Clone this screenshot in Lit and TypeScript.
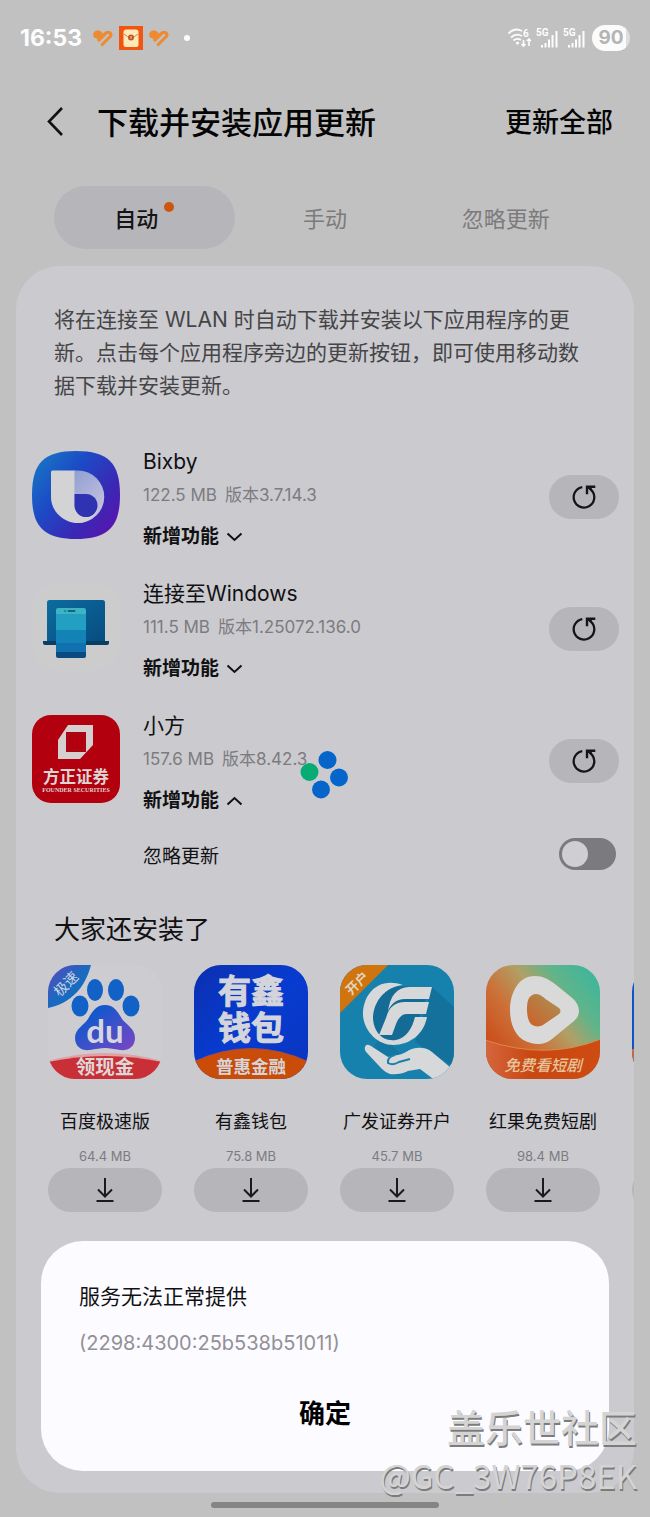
import { LitElement, html, css, svg, nothing } from "lit";
import { customElement, property, state } from "lit/decorators.js";

interface AppUpdate {
  id: string;
  name: string;
  size: string;
  version: string;
  expanded: boolean;
}

interface Suggestion {
  id: string;
  name: string;
  size: string;
}

const UPDATES: AppUpdate[] = [
  { id: "bixby", name: "Bixby", size: "122.5 MB", version: "版本3.7.14.3", expanded: false },
  { id: "windows", name: "连接至Windows", size: "111.5 MB", version: "版本1.25072.136.0", expanded: false },
  { id: "founder", name: "小方", size: "157.6 MB", version: "版本8.42.3", expanded: true },
];

const SUGGESTIONS: Suggestion[] = [
  { id: "baidu", name: "百度极速版", size: "64.4 MB" },
  { id: "wallet", name: "有鑫钱包", size: "75.8 MB" },
  { id: "guangfa", name: "广发证券开户", size: "45.7 MB" },
  { id: "hongguo", name: "红果免费短剧", size: "98.4 MB" },
  { id: "next", name: "", size: "" },
];

const ART: Record<string, unknown> = {
  bixby: svg`
    <defs>
      <linearGradient id="a" x1="0" y1="0.1" x2="1" y2="0.9">
        <stop offset="0" stop-color="#1679c4"/><stop offset="0.35" stop-color="#1c4bc6"/>
        <stop offset="0.7" stop-color="#3a28b4"/><stop offset="1" stop-color="#5d12ad"/>
      </linearGradient>
      <linearGradient id="b" x1="0" y1="0" x2="0.6" y2="1">
        <stop offset="0" stop-color="#8f9ed2"/><stop offset="1" stop-color="#c6c4de"/>
      </linearGradient>
    </defs>
    <path fill="url(#a)" d="M44 0C76 0 88 12 88 44S76 88 44 88 0 76 0 44 12 0 44 0Z"/>
    <path fill="url(#b)" d="M42 19.500H46A26 26 0 0 1 46 72H42Z"/>
    <path fill="#d3d3d6" d="M20.500 19.500H42.500V55C43 61 48 66 54 66C60 66 65 61 66 55C65 65 56 72 46 72C31 72 19 60 19 46V21Q19 19.500 20.500 19.500Z"/>
    <path fill="#2f32b1" d="M42.500 43H54A11.500 11.500 0 1 1 42.500 54.500Z"/>`,
  windows: svg`
    <defs>
      <linearGradient id="a" x1="0" y1="0" x2="1" y2="1">
        <stop offset="0" stop-color="#0b6d9f"/><stop offset="1" stop-color="#074b80"/>
      </linearGradient>
    </defs>
    <rect width="88" height="88" rx="26" fill="#cccccd"/>
    <rect x="15" y="17" width="58" height="43" rx="2.500" fill="url(#a)"/>
    <path fill="#073e61" d="M11 58H77V60Q77 62 75 62H13Q11 62 11 60Z"/>
    <rect x="24" y="25" width="30" height="50" rx="2" fill="#0a4a80"/>
    <path fill="#3fb3c6" d="M26 25H52Q54 25 54 27V31H24V27Q24 25 26 25Z"/>
    <path fill="#239fc2" d="M24 31H54V47H24Z"/>
    <path fill="#1383b7" d="M24 47H54V60H24Z"/>
    <path fill="#1071ae" d="M24 60H54V69H24Z"/>
    <circle cx="33" cy="28" r="0.800" fill="#0b4b68"/>
    <rect x="35.500" y="27.300" width="8" height="1.500" rx="0.700" fill="#0b4b68"/>`,
  founder: svg`
    <rect width="88" height="88" rx="19" fill="#b3000e"/>
    <path fill="#d5cfcf" d="M36 10H61V30L48 44H26V25Z"/>
    <path fill="#b3000e" d="M34 17H54V37H34Z"/>
    <path fill="none" stroke="#8f1a24" stroke-width="0.800" d="M36 19H52V35H36Z"/>
    <text class="art cn" x="44" y="68" font-size="16.500" text-anchor="middle" fill="#dcd6d6">方正证券</text>
    <text class="art serif" x="44" y="77" font-size="6" text-anchor="middle" fill="#dcd6d6">FOUNDER SECURITIES</text>`,
  baidu: svg`
    <defs>
      <clipPath id="c"><rect width="114" height="114" rx="27"/></clipPath>
      <linearGradient id="a" x1="0" y1="0" x2="1" y2="1">
        <stop offset="0.250" stop-color="#1557cb"/><stop offset="1" stop-color="#7c45c6"/>
      </linearGradient>
      <linearGradient id="b" x1="0" y1="0" x2="1" y2="1">
        <stop offset="0" stop-color="#6345be"/><stop offset="0.500" stop-color="#176bc0"/>
      </linearGradient>
    </defs>
    <g clip-path="url(#c)">
      <rect width="114" height="114" fill="#cdcdd1"/>
      <path fill="url(#b)" d="M0 0H43C37 23 23 38 0 43Z"/>
      <g fill="#1161c7">
        <ellipse cx="47" cy="25" rx="8" ry="11"/><ellipse cx="68" cy="25" rx="8" ry="11"/>
        <ellipse cx="32" cy="41" rx="8.500" ry="10.500"/><ellipse cx="83" cy="41" rx="8.500" ry="10.500"/>
      </g>
      <path fill="url(#a)" d="M57 40C66 40 70 47 74 54C79 60 87 64 87 73C87 82 80 86 72 85C66 84 62 83 57 83S48 84 42 85C34 86 27 82 27 73C27 64 36 60 40 54C44 47 48 40 57 40Z"/>
      <path fill="#e0a2a6" d="M0 96Q57 80 114 96V114H0Z"/>
      <path fill="#c92f37" d="M0 97Q57 85 114 97V114H0Z"/>
    </g>
    <text class="art round" x="57" y="78" font-size="33" text-anchor="middle" fill="#d6d6dc">du</text>
    <text class="art cn" x="57" y="109" font-size="19.500" text-anchor="middle" fill="#dcd8d8">领现金</text>
    <text class="art cnr" x="0" y="5" font-size="14" text-anchor="middle" fill="#cfd3e0" transform="translate(18 19) rotate(-45)">极速</text>`,
  wallet: svg`
    <defs>
      <clipPath id="c"><rect width="114" height="114" rx="27"/></clipPath>
      <linearGradient id="a" x1="0" y1="0" x2="1" y2="1">
        <stop offset="0" stop-color="#0b30b0"/><stop offset="0.500" stop-color="#073bd0"/><stop offset="1" stop-color="#0a35bd"/>
      </linearGradient>
    </defs>
    <g clip-path="url(#c)">
      <rect width="114" height="114" fill="url(#a)"/>
      <path fill="#c94c08" stroke="#a24a55" d="M-1 97Q57 70 115 97V116H-1Z"/>
    </g>
    <g class="art cn" text-anchor="middle" fill="#d4d5dc">
      <text x="57" y="38" font-size="33" stroke="#d4d5dc">有鑫</text>
      <text x="57" y="75" font-size="33" stroke="#d4d5dc">钱包</text>
      <text x="57" y="108" font-size="17.500">普惠金融</text>
    </g>`,
  guangfa: svg`
    <defs><clipPath id="c"><rect width="114" height="114" rx="27"/></clipPath></defs>
    <g clip-path="url(#c)">
      <rect width="114" height="114" fill="#1781ae"/>
      <path fill="#14719c" d="M92 22L114 42V102L75 77Z"/>
      <path fill="#126b95" d="M42 70L75 104L58 110L32 84Z" opacity="0.500"/>
      <path fill="#d0740d" d="M0 0H48L0 48Z"/>
      <path fill="#146c96" d="M62 21C44 22 32 36 33 54C34 66 42 76 53 77C70 77 78 64 80 50L90 24Z"/>
      <path fill="#d6d8da" d="M63 20C36 11 22 32 23 51C25 68 39 80 53 80C70 80 84 69 87 52H75C72 64 66 73 56 75C42 77 33 66 33 52C34 36 45 22 63 20Z"/>
      <path fill="#d6d8da" d="M92 22L89 34H65C56 34 51 39 48 46C50 31 57 22 69 22Z"/>
      <path fill="#d6d8da" d="M89 37L86 49H67C61 49 58 54 56 59L52 70H39L46 53C49 42 55 37 65 37Z"/>
      <path fill="#d6d8da" d="M25 82Q26 78 31 81L48 92C54 90 59 91 66 87Q74 82 82 83Q87 83 92 87L111 103L96 116L80 104L68 106Q60 110 50 109Q46 108 42 104L27 88Q24 85 25 82Z"/>
      <path fill="none" stroke="#1781ae" stroke-width="2" d="M55 90Q47 92 48 98Q53 101 59 97L70 94"/>
    </g>
    <text class="art cn" x="0" y="5" font-size="13" text-anchor="middle" fill="#e0d6c4" transform="translate(17 18) rotate(-45)">开户</text>`,
  hongguo: svg`
    <defs>
      <clipPath id="c"><rect width="114" height="114" rx="27"/></clipPath>
      <linearGradient id="a" x1="0" y1="0.700" x2="0.9" y2="0">
        <stop offset="0" stop-color="#cb4a18"/><stop offset="0.300" stop-color="#cc7038"/><stop offset="0.550" stop-color="#b0a065"/>
        <stop offset="0.750" stop-color="#60b48a"/><stop offset="1" stop-color="#3db69b"/>
      </linearGradient>
      <linearGradient id="b" x1="0" y1="0" x2="1" y2="0">
        <stop offset="0" stop-color="#d4663f"/><stop offset="0.400" stop-color="#c94710"/><stop offset="1" stop-color="#ce4b14"/>
      </linearGradient>
      <linearGradient id="d" x1="0" y1="1" x2="1" y2="0">
        <stop offset="0" stop-color="#cc6028"/><stop offset="1" stop-color="#a99458"/>
      </linearGradient>
    </defs>
    <g clip-path="url(#c)">
      <rect width="114" height="114" fill="url(#a)"/>
      <path fill="url(#b)" stroke="#d88a4a" d="M-1 75Q60 96 115 74V115H-1Z"/>
    </g>
    <path fill="#d9d9da" d="M49 11C57 11 62 14 69 19L85 32C95 40 95 50 88 56L66 74C60 79 53 80 45 78C30 75 24 60 24 45S31 11 49 11Z"/>
    <path fill="url(#d)" d="M50 29C54 29 57 32 61 35L73 43Q76 46 73 49L57 60C54 62 48 62 45 59C40 54 40 38 43 33Q46 29 50 29Z"/>
    <text class="art cnm slant" x="57" y="106" font-size="15.500" text-anchor="middle" fill="#e6c49c">免费看短剧</text>`,
  next: svg`
    <rect width="114" height="114" rx="27" fill="#0d54c4"/>
    <path fill="#d06a3a" d="M0 84H114V87A27 27 0 0 1 87 114H27A27 27 0 0 1 0 87Z"/>`,
};

@customElement("app-icon")
export class AppIcon extends LitElement {
  @property() name = "";

  static styles = css`
    :host { display: block; }
    svg { display: block; width: 100%; height: auto; overflow: visible; }
    .art { font-weight: 700; }
    .cn { font-family: "Noto Sans CJK SC", sans-serif; }
    .cnr { font-family: "Noto Sans CJK SC", sans-serif; font-weight: 400; }
    .cnm { font-family: "Noto Sans CJK SC", sans-serif; font-weight: 500; }
    .round { font-family: Lato, sans-serif; }
    .serif { font-family: "Liberation Serif", serif; }
    .slant { font-style: italic; }
  `;

  render() {
    const side = UPDATES.some((u) => u.id === this.name) ? 88 : 114;
    return html`<svg viewBox="0 0 ${side} ${side}" aria-hidden="true">${ART[this.name]}</svg>`;
  }
}

@customElement("status-bar")
export class StatusBar extends LitElement {
  static styles = css`
    :host {
      display: flex;
      align-items: center;
      height: 76px;
      padding: 0 20px;
      color: #fdfdfd;
      font: 700 23px/28px Inter, sans-serif;
    }
    svg { display: block; flex: none; }
    .notices { display: flex; align-items: center; gap: 6px; margin-left: 11px; }
    .dot { width: 6px; height: 6px; margin-left: 9px; border-radius: 50%; background: #fdfdfd; }
    .signals { display: flex; align-items: center; gap: 4px; margin-left: auto; }
    .battery {
      width: 38px;
      margin-left: 2px;
      border-radius: 13px;
      background: linear-gradient(90deg, #fbfbfb 90%, #dedede 90%);
      color: #b4b4b4;
      font-size: 19px;
      line-height: 26px;
      text-align: center;
    }
    .gen { font: 700 10px Roboto, sans-serif; }
  `;

  private heart() {
    return html`<svg width="20" height="17" viewBox="0 0 20 17" fill="none" stroke="#ee8a32" stroke-width="3.200" stroke-linecap="round" stroke-linejoin="round">
      <path d="M2.300 6.500Q0.800 3.500 3.500 2.200Q6 1.200 8 3.800L4.800 7.500L2.300 6Z" fill="#ee8a32" />
      <path d="M5.800 10L12.300 3.500Q13.500 2.200 15 2.300" />
      <path d="M9.300 14.500L17.200 6.500Q18.600 4.500 17 2.800" />
    </svg>`;
  }

  private cell() {
    return html`<svg width="23" height="22" viewBox="0 0 23 22" fill="#fdfdfd">
      <text class="gen" x="0" y="9">5G</text>
      <path d="M5 18h2v2.500h-2zM8.500 16h2v4.500h-2zM12 12.500h2v8h-2zM15.500 8h2v12.500h-2zM19.500 4h2v16.500h-2z"/>
    </svg>`;
  }

  render() {
    return html`
      <span>16:53</span>
      <span class="notices">
        ${this.heart()}
        <svg width="24" height="24" viewBox="0 0 24 24">
          <rect width="24" height="24" fill="#f0560f"/>
          <rect x="4.500" y="3.500" width="15" height="17.500" rx="2.500" fill="#fdeab8"/>
          <path d="M5 8Q12 15 19 8" fill="none" stroke="#c98a4a"/>
          <circle cx="12" cy="11.500" r="3" fill="#c2562b"/>
          <path d="M12 10v3" stroke="#f7c9a0"/>
        </svg>
        ${this.heart()}
        <span class="dot"></span>
      </span>
      <span class="signals">
        <svg width="24" height="22" viewBox="0 0 24 22" fill="none" stroke="#fdfdfd" stroke-width="1.800">
          <path d="M0.500 6.500Q7 0 14 4M3 10.500Q8 5.500 14 9M5.500 13.500Q9 10.500 13 13"/>
          <circle cx="9.500" cy="16" r="1.600" fill="#fdfdfd" stroke="none"/>
          <path stroke-width="1.600" d="M15.500 13V19M13.500 17L15.500 19L17.500 17M21 19V12M19 14L21 12L23 14"/>
          <text class="gen" x="15" y="9.500" fill="#fdfdfd" stroke="none">6</text>
        </svg>
        ${this.cell()} ${this.cell()}
        <span class="battery">90</span>
      </span>
    `;
  }
}

@customElement("app-root")
export class AppRoot extends LitElement {
  @state() private tab = 0;
  @state() private dialogOpen = true;
  @state() private updates = UPDATES;

  static styles = css`
    :host {
      display: flex;
      flex-direction: column;
      position: relative;
      box-sizing: border-box;
      min-height: 100vh;
      background: #c1c1c1;
      color: #111113;
      font-family: Inter, "Noto Sans CJK SC", sans-serif;
    }
    button {
      border: 0;
      padding: 0;
      background: none;
      color: inherit;
      font: inherit;
      cursor: pointer;
    }
    h1, h2, p { margin: 0; font-weight: 400; }
    svg { display: block; }

    .header { display: flex; align-items: center; height: 92px; padding: 0 37px 0 43px; }
    .back { width: 24px; margin-right: 30px; }
    .title { flex: 1; padding-top: 2px; font-size: 31px; line-height: 44px; font-weight: 500; color: #050505; }
    .update-all { padding-top: 2px; font-size: 27px; line-height: 40px; font-weight: 500; color: #050505; }

    .tabs { display: flex; margin: 18px 54px 17px; }
    .tab {
      display: flex;
      flex: 1;
      justify-content: center;
      gap: 6px;
      padding-top: 4px;
      border-radius: 32px;
      color: #7b7b7d;
      font-size: 22px;
      line-height: 59px;
    }
    .tab.active { background: #b6b5ba; color: #151518; font-weight: 500; }
    .badge {
      width: 10px;
      height: 10px;
      margin-top: 12px;
      border-radius: 50%;
      background: #cd560e;
    }

    .card {
      flex: 1;
      margin: 0 16px;
      border-radius: 44px;
      background: #cbcacf;
      overflow: hidden;
    }
    .intro { padding: 37px 38px 27px; color: #454547; font-size: 21px; line-height: 33px; }

    .row { display: flex; align-items: center; padding: 0 15px 0 16px; }
    .row app-icon { flex: none; width: 88px; margin-right: 23px; }
    .info { flex: 1; min-width: 0; padding-top: 17px; }
    .name { font-size: 21px; line-height: 32px; }
    .meta { display: flex; gap: 8px; color: #7c7c80; font-size: 17px; line-height: 35px; }
    .news {
      display: flex;
      align-items: center;
      gap: 7px;
      font-size: 19px;
      line-height: 48px;
      font-weight: 600;
    }
    .pill {
      display: flex;
      align-items: center;
      justify-content: center;
      height: 44px;
      border-radius: 22px;
      background: #b6b5ba;
    }
    .refresh { flex: none; width: 70px; margin-top: 4px; }

    .ignore {
      display: flex;
      align-items: center;
      justify-content: space-between;
      padding: 4px 18px 0 127px;
      font-size: 19px;
      line-height: 56px;
    }
    .switch {
      appearance: none;
      display: grid;
      align-items: center;
      width: 57px;
      height: 32px;
      margin: 0 0 6px;
      padding: 0 3px;
      border-radius: 16px;
      background: #7b7a7f;
    }
    .switch::before {
      content: "";
      width: 26px;
      height: 26px;
      border-radius: 50%;
      background: #cfced3;
    }
    .switch:checked::before { justify-self: end; }

    .heading { padding: 25px 38px 15px; font-size: 26px; line-height: 40px; }
    .carousel { display: flex; gap: 32px; padding-left: 32px; overflow: hidden; }
    .item { flex: none; width: 114px; }
    .item-name {
      display: flex;
      justify-content: center;
      height: 28px;
      margin-top: 29px;
      font-size: 18px;
      line-height: 28px;
      white-space: nowrap;
    }
    .item-size {
      height: 24px;
      margin-top: 8px;
      color: #7c7c80;
      font-size: 13px;
      line-height: 24px;
      text-align: center;
    }
    .item .pill { width: 100%; }

    .gesture { width: 35%; height: 6px; margin: 9px auto; border-radius: 3px; background: #858585; }

    .spinner { position: absolute; top: 750px; left: calc(50% - 25px); }

    .dialog {
      position: absolute;
      left: 41px;
      right: 41px;
      bottom: 46px;
      border-radius: 42px;
      background: #fcfbff;
    }
    .dialog-body { padding: 39px 38px 0; font-size: 21px; line-height: 34px; }
    .code { padding-top: 12px; color: #929196; font-size: 20px; }
    .confirm {
      display: block;
      width: 100%;
      padding: 34px 0 37px;
      color: #000;
      font-size: 26px;
      line-height: 40px;
      font-weight: 600;
    }

    .watermark {
      position: absolute;
      right: 13px;
      bottom: 18px;
      color: #d4d4d4;
      font-family: "Noto Sans CJK SC", sans-serif;
      text-align: right;
      text-shadow: 1px 2px 0 #7c7c7c;
      pointer-events: none;
    }
    .community { padding-bottom: 2px; font-size: 38px; line-height: 47px; font-weight: 500; }
    .user { font-size: 33px; line-height: 48px; }
  `;

  private toggleNews(id: string) {
    this.updates = this.updates.map((u) => (u.id === id ? { ...u, expanded: !u.expanded } : u));
  }

  private renderUpdate(u: AppUpdate) {
    return html`
      <div class="row">
        <app-icon name=${u.id}></app-icon>
        <div class="info">
          <div class="name">${u.name}</div>
          <div class="meta"><span>${u.size}</span><span>${u.version}</span></div>
          <button class="news" aria-expanded=${u.expanded} @click=${() => this.toggleNews(u.id)}>
            新增功能
            <svg width="17" height="10" viewBox="0 0 17 10" fill="none" stroke="#111113" stroke-width="2">
              <path d=${u.expanded ? "M1.500 8.500L8.500 2L15.500 8.500" : "M1.500 1.500L8.500 8L15.500 1.500"} />
            </svg>
          </button>
        </div>
        <button class="pill refresh" aria-label="更新">
          <svg width="26" height="26" viewBox="0 0 26 26" fill="none" stroke="#151518" stroke-width="2.300">
            <path d="M11.300 3.100A10.300 10.300 0 1 0 21 6.800L17 3" />
            <path d="M16 10.300V2.800H24.300" stroke-width="2.400" />
            <path d="M16 3L21 3L20.500 7Z" fill="#151518" stroke="none" />
          </svg>
        </button>
      </div>
      ${u.expanded
        ? html`<label class="ignore">忽略更新<input class="switch" type="checkbox" role="switch" /></label>`
        : nothing}
    `;
  }

  private renderSuggestion(s: Suggestion) {
    return html`
      <div class="item">
        <app-icon name=${s.id}></app-icon>
        <div class="item-name">${s.name}</div>
        <div class="item-size">${s.size}</div>
        <button class="pill" aria-label="下载">
          <svg width="20" height="26" viewBox="0 0 20 26" fill="none" stroke="#1a1a1d" stroke-width="2">
            <path d="M10 1V19M3 12.500L10 19.500L17 12.500M1.500 24H18.500" />
          </svg>
        </button>
      </div>
    `;
  }

  render() {
    return html`
      <status-bar></status-bar>
      <header class="header">
        <button class="back" aria-label="返回">
          <svg width="24" height="32" viewBox="0 0 24 32" fill="none" stroke="#111" stroke-width="2.600">
            <path d="M19 2L6 15.500L19 29" />
          </svg>
        </button>
        <h1 class="title">下载并安装应用更新</h1>
        <button class="update-all">更新全部</button>
      </header>
      <div class="tabs" role="tablist">
        ${["自动", "手动", "忽略更新"].map(
          (t, i) => html`<button
            class="tab ${this.tab === i ? "active" : ""}"
            role="tab"
            aria-selected=${this.tab === i}
            @click=${() => (this.tab = i)}
          >${t}${i === 0 ? html`<span class="badge"></span>` : nothing}</button>`
        )}
      </div>
      <main class="card">
        <p class="intro">将在连接至 WLAN 时自动下载并安装以下应用程序的更新。点击每个应用程序旁边的更新按钮，即可使用移动数据下载并安装更新。</p>
        ${this.updates.map((u) => this.renderUpdate(u))}
        <h2 class="heading">大家还安装了</h2>
        <div class="carousel">${SUGGESTIONS.map((s) => this.renderSuggestion(s))}</div>
      </main>
      <div class="gesture"></div>
      <svg class="spinner" width="50" height="50" viewBox="0 0 50 50" fill="#0565ca">
        <circle cx="27.500" cy="10" r="9" />
        <circle cx="39" cy="27.500" r="9" />
        <circle cx="21" cy="39.500" r="9" />
        <circle cx="9.500" cy="22" r="9" fill="#06ac74" />
      </svg>
      ${this.dialogOpen
        ? html`<section class="dialog" role="alertdialog" aria-labelledby="message">
            <div class="dialog-body">
              <p id="message">服务无法正常提供</p>
              <p class="code">(2298:4300:25b538b51011)</p>
            </div>
            <button class="confirm" @click=${() => (this.dialogOpen = false)}>确定</button>
          </section>`
        : nothing}
      <div class="watermark">
        <div class="community">盖乐世社区</div>
        <div class="user">@GC_3W76P8EK</div>
      </div>
    `;
  }
}
